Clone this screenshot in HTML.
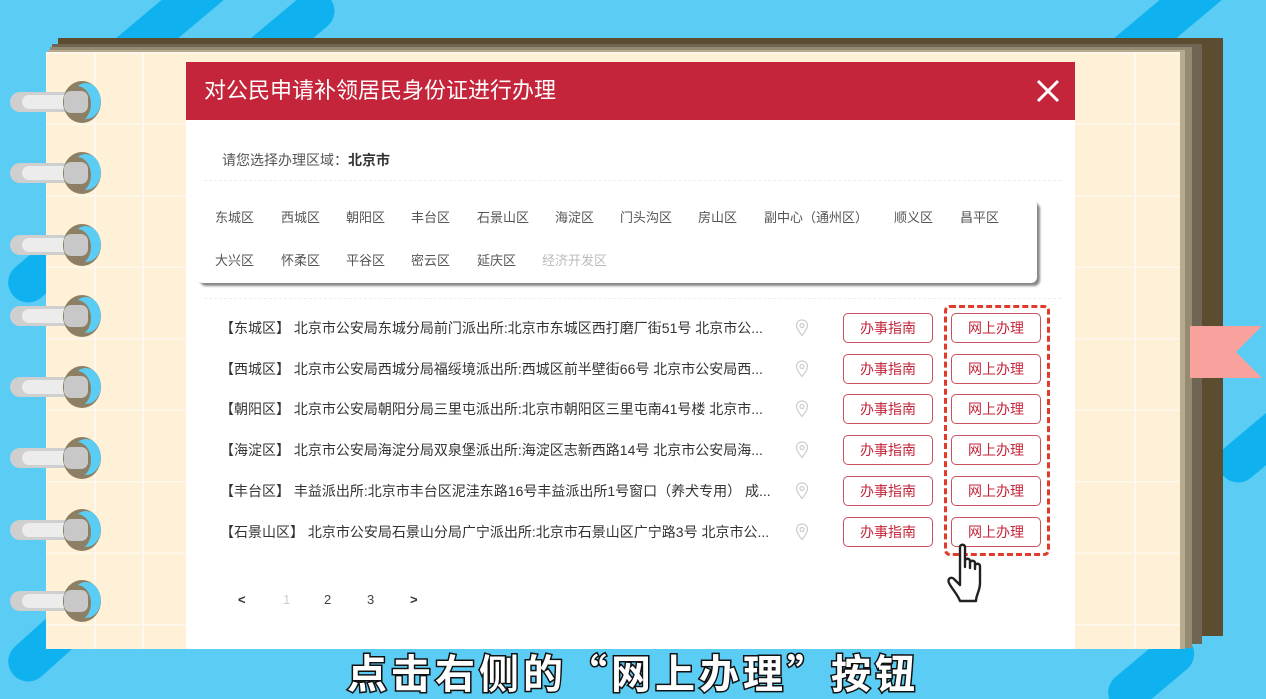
<!DOCTYPE html>
<html style="width:1266px;height:699px;overflow:hidden"><head><meta charset="utf-8"><style>
*{margin:0;padding:0;box-sizing:border-box}
html,body{width:1266px;height:699px;overflow:hidden}
body{background:#5bcdf5;font-family:"Liberation Sans","Noto Sans CJK SC",sans-serif}
#w{position:relative;width:1266px;height:699px;overflow:hidden;background:#5bcdf5}
.a{position:absolute}
.stripe{position:absolute;background:#0fb2ef;height:40px;border-radius:20px;transform-origin:0 0}
.ring{position:absolute;left:63px;width:38px;height:42px;border-radius:50%;background:#8c7f63;overflow:hidden}
.ring .i{position:absolute;left:8px;top:2px;width:30px;height:36px;border-radius:50%;background:#5bcdf5}
.peg{position:absolute;left:10px;width:70px;height:20px;border-radius:10px;background:#cfcfcf}
.peg:after{content:"";position:absolute;left:12px;top:3px;width:48px;height:14px;border-radius:7px;background:#ececec}
.d{position:absolute;font-size:13px;color:#555}
.row{position:absolute;left:220px;font-size:14px;color:#333;white-space:nowrap}
.btn{position:absolute;width:90px;height:30px;border:1px solid #c9505f;border-radius:5px;color:#c4253a;font-size:14px;text-align:center;line-height:28px;background:#fff}
.pin{position:absolute;left:795px}
</style></head><body><div id="w">
<div class="stripe" style="left:90px;top:60px;width:200px;transform:rotate(-40deg)"></div>
<div class="stripe" style="left:225px;top:60px;width:120px;transform:rotate(-40deg)"></div>
<div class="stripe" style="left:0;top:280px;width:120px;transform:rotate(-40deg)"></div>
<div class="stripe" style="left:0;top:660px;width:100px;transform:rotate(-42deg)"></div>
<div class="stripe" style="left:1100px;top:50px;width:160px;transform:rotate(-40deg)"></div>
<div class="stripe" style="left:1210px;top:460px;width:100px;transform:rotate(-40deg)"></div>
<div class="stripe" style="left:1100px;top:690px;width:100px;transform:rotate(-40deg)"></div>

<div class="a" style="left:58px;top:38px;width:1165px;height:598px;background:#5c4d31"></div>
<div class="a" style="left:52px;top:44px;width:1150px;height:600px;background:#6e6553"></div>
<div class="a" style="left:50px;top:47px;width:1142px;height:601px;background:#958a72"></div>
<div class="a" style="left:48px;top:50px;width:1137px;height:599px;background:#b7ab8f"></div>
<div class="a" style="left:46px;top:52px;width:1134px;height:597px;background:#fef1d8;background-image:linear-gradient(90deg,transparent 48px,#fff8ee 48px,#fff8ee 50px,transparent 50px,transparent 96px,#fff8ee 96px,#fff8ee 98px,transparent 98px),linear-gradient(0deg,transparent 70px,#fff8ee 70px,#fff8ee 72px,transparent 72px);background-size:1134px 597px,100% 71.5px"></div>
<div class="a" style="left:1134px;top:52px;width:2px;height:597px;background:#fff8ee"></div>

<svg class="a" style="left:1190px;top:326px" width="76" height="52"><polygon points="0,0 72,0 46,26 72,52 0,52" fill="#f9a19c"/></svg>

<div id="rings"></div>
<script>
var h='';[102,173,245,316,387,458,530,601].forEach(function(y){
h+='<div class="peg" style="top:'+(y-10)+'px"></div><div class="ring" style="top:'+(y-21)+'px"><div class="i"></div><div class="a" style="left:0;top:5px;width:28px;height:36px;border-radius:50%;background:#8c7f63"></div><div class="a" style="left:1px;top:10px;width:24px;height:22px;border-radius:7px;background:#c8c8c8"></div></div>';});
document.getElementById('rings').innerHTML=h;
</script>

<div class="a" style="left:186px;top:62px;width:889px;height:587px;background:#fff"></div>
<div class="a" style="left:186px;top:62px;width:889px;height:58px;background:#c4253a;color:#fff;font-size:22px;line-height:58px;padding-left:18px">对公民申请补领居民身份证进行办理</div>
<svg class="a" style="left:1036px;top:79px" width="24" height="24"><path d="M2 2L22 22M22 2L2 22" stroke="#fff" stroke-width="3"/></svg>

<div class="a" style="left:222px;top:150px;font-size:14px;color:#555">请您选择办理区域：<b style="color:#333">北京市</b></div>
<div class="a" style="left:204px;top:180px;width:857px;border-top:1px dashed #eee"></div>

<div class="a" style="left:197px;top:200px;width:840px;height:83px;background:#fff;border-radius:6px;box-shadow:3px 3px 2px #888"></div>
<div class="d" style="left:215px;top:207px">东城区</div>
<div class="d" style="left:281px;top:207px">西城区</div>
<div class="d" style="left:346px;top:207px">朝阳区</div>
<div class="d" style="left:411px;top:207px">丰台区</div>
<div class="d" style="left:477px;top:207px">石景山区</div>
<div class="d" style="left:555px;top:207px">海淀区</div>
<div class="d" style="left:620px;top:207px">门头沟区</div>
<div class="d" style="left:698px;top:207px">房山区</div>
<div class="d" style="left:764px;top:207px">副中心（通州区）</div>
<div class="d" style="left:894px;top:207px">顺义区</div>
<div class="d" style="left:960px;top:207px">昌平区</div>
<div class="d" style="left:215px;top:250px">大兴区</div>
<div class="d" style="left:281px;top:250px">怀柔区</div>
<div class="d" style="left:346px;top:250px">平谷区</div>
<div class="d" style="left:411px;top:250px">密云区</div>
<div class="d" style="left:477px;top:250px">延庆区</div>
<div class="d" style="left:542px;top:250px;color:#bbb">经济开发区</div>
<div class="a" style="left:204px;top:298px;width:857px;border-top:1px dashed #eee"></div>

<div id="rows"></div>
<script>
var r=['【东城区】 北京市公安局东城分局前门派出所:北京市东城区西打磨厂街51号 北京市公...','【西城区】 北京市公安局西城分局福绥境派出所:西城区前半壁街66号 北京市公安局西...','【朝阳区】 北京市公安局朝阳分局三里屯派出所:北京市朝阳区三里屯南41号楼 北京市...','【海淀区】 北京市公安局海淀分局双泉堡派出所:海淀区志新西路14号 北京市公安局海...','【丰台区】 丰益派出所:北京市丰台区泥洼东路16号丰益派出所1号窗口（养犬专用） 成...','【石景山区】 北京市公安局石景山分局广宁派出所:北京市石景山区广宁路3号 北京市公...'];
var h='';r.forEach(function(t,i){var y=328+i*40.7;
h+='<div class="row" style="top:'+(y-10)+'px">'+t+'</div>';
h+='<svg class="pin" style="top:'+(y-9)+'px" width="14" height="18"><path d="M7 1C3.5 1 1.5 3.5 1.5 6.5C1.5 10 7 16.5 7 16.5S12.5 10 12.5 6.5C12.5 3.5 10.5 1 7 1Z" fill="none" stroke="#ccc" stroke-width="1.2"/><circle cx="7" cy="6.5" r="2" fill="none" stroke="#ccc" stroke-width="1.2"/></svg>';
h+='<div class="btn" style="left:843px;top:'+(y-15)+'px">办事指南</div><div class="btn" style="left:951px;top:'+(y-15)+'px">网上办理</div>';});
document.getElementById('rows').innerHTML=h;
</script>
<div class="a" style="left:944px;top:305px;width:106px;height:251px;border:3px dashed #e03a2a;border-radius:6px"></div>

<svg class="a" style="left:946px;top:543px" width="50" height="62" viewBox="0 0 50 62"><path d="M14 4C14 1 19 1 19 4L19 24L19 18C19 15 24 15 24 18L24 25L24 20C24 17 29 17 29 20L29 26L29 23C29 20 34 20 34 23L34 40C34 48 30 52 30 58L14 58C12 52 6 46 3 40C1 36 5 33 8 36L14 42Z" fill="#fff" stroke="#222" stroke-width="2.4" stroke-linejoin="round"/></svg>

<div class="a" style="left:238px;top:592px;font-size:13px;color:#333;font-weight:bold">&lt;</div>
<div class="a" style="left:283px;top:592px;font-size:13px;color:#ccc">1</div>
<div class="a" style="left:324px;top:592px;font-size:13px;color:#444">2</div>
<div class="a" style="left:367px;top:592px;font-size:13px;color:#444">3</div>
<div class="a" style="left:410px;top:592px;font-size:13px;color:#333;font-weight:bold">&gt;</div>

<div class="a" style="left:0;top:645px;width:1266px;height:52px;text-align:center;font-size:40px;font-weight:bold;color:#fff;letter-spacing:4px;-webkit-text-stroke:3px #111;paint-order:stroke fill;font-family:'Noto Sans CJK SC',sans-serif;line-height:52px">点击右侧的“网上办理”按钮</div>
</div></body></html>
